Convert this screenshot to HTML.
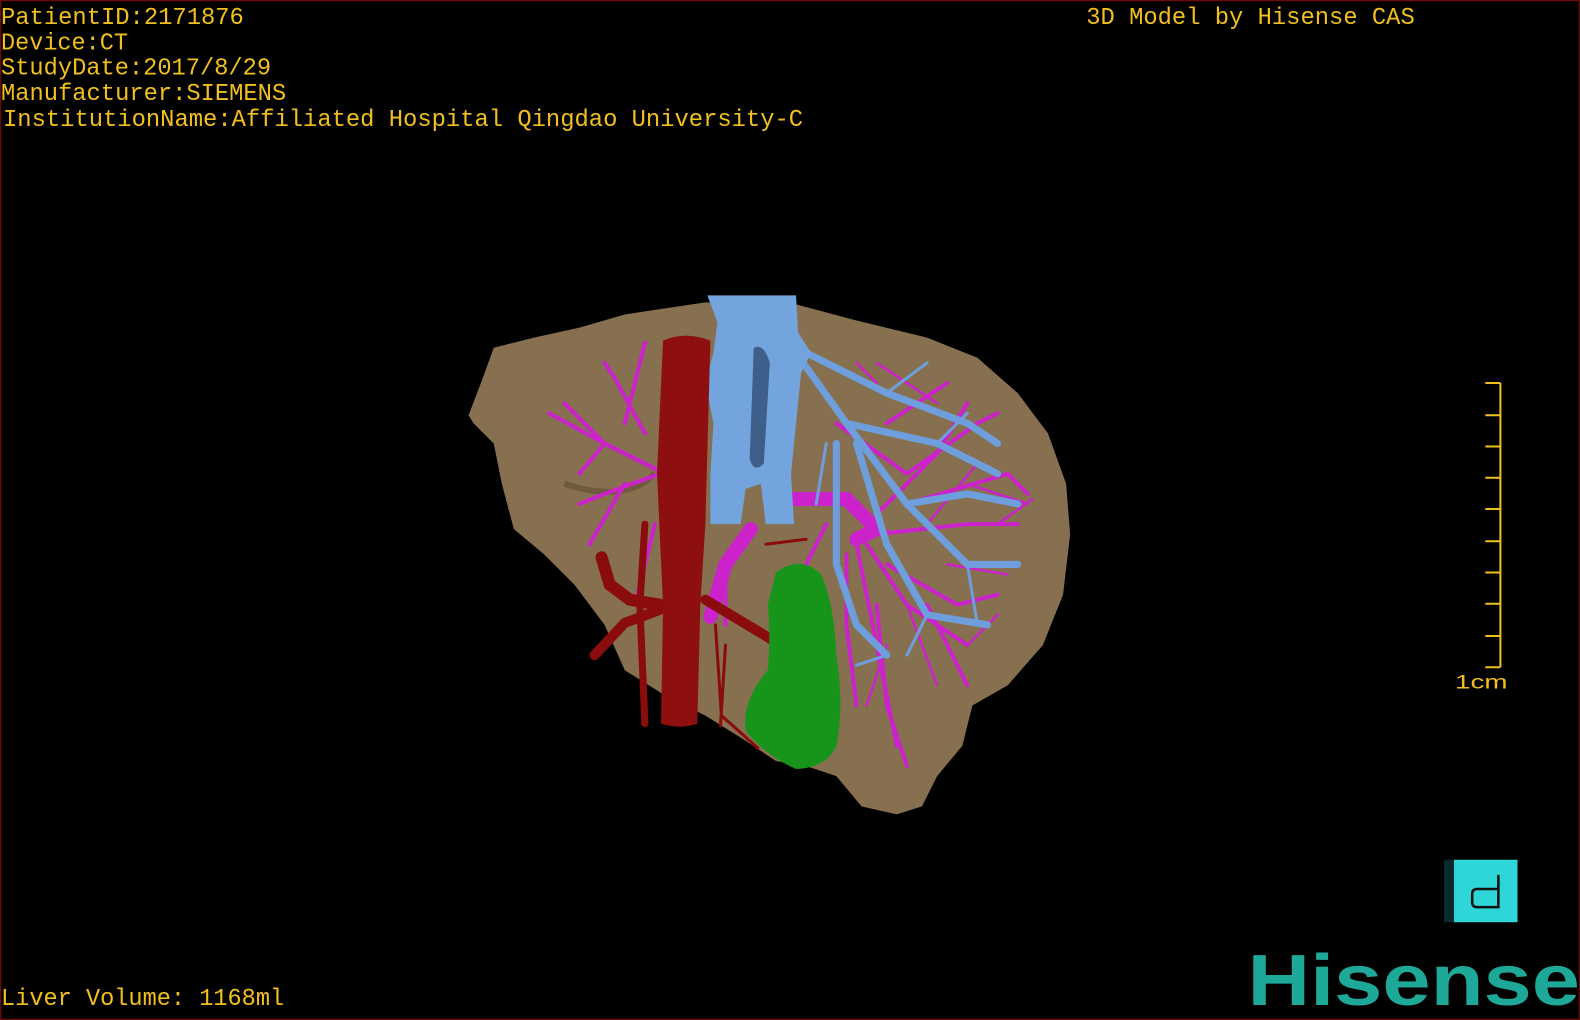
<!DOCTYPE html>
<html><head><meta charset="utf-8"><style>
html,body{margin:0;padding:0;background:#000;width:1580px;height:1020px;overflow:hidden}
svg{display:block}
text{font-family:"Liberation Mono",monospace;fill:#f2c01e}
</style></head><body>
<svg width="1580" height="1020" viewBox="0 0 1568 1012" preserveAspectRatio="none">
<rect x="0.5" y="0.5" width="1567" height="1011" fill="#000" stroke="#6a0a0a" stroke-width="1.5"/>
<g font-size="23.5">
<text x="1" y="24" textLength="241" lengthAdjust="spacingAndGlyphs">PatientID:2171876</text>
<text x="1" y="49" textLength="126" lengthAdjust="spacingAndGlyphs">Device:CT</text>
<text x="1" y="74" textLength="268" lengthAdjust="spacingAndGlyphs">StudyDate:2017/8/29</text>
<text x="1" y="99" textLength="283" lengthAdjust="spacingAndGlyphs">Manufacturer:SIEMENS</text>
<text x="3" y="125" textLength="794" lengthAdjust="spacingAndGlyphs">InstitutionName:Affiliated Hospital Qingdao University-C</text>
<text x="1078" y="24" textLength="326" lengthAdjust="spacingAndGlyphs">3D Model by Hisense CAS</text>
<text x="1" y="997" textLength="281" lengthAdjust="spacingAndGlyphs">Liver Volume: 1168ml</text>
</g>
<g stroke="#f2c01e" stroke-width="2" fill="none">
<path d="M1489 380 V662"/>
<path d="M1474 380H1489M1474 412H1489M1474 443H1489M1474 474H1489M1474 505H1489M1474 537H1489M1474 568H1489M1474 599H1489M1474 631H1489M1474 662H1489"/>
</g>
<text x="1444" y="683" font-size="19" style="font-family:'Liberation Sans',sans-serif" textLength="52" lengthAdjust="spacingAndGlyphs">1cm</text>
<rect x="1433" y="853" width="10" height="62" fill="#0b2a2c"/>
<rect x="1443" y="853" width="63" height="62" fill="#2fd6d8"/>
<path d="M1487 868V900H1466Q1461 900 1461 895V887Q1461 882 1466 882H1487" fill="none" stroke="#111" stroke-width="2.5"/>
<text x="1238" y="997" font-size="72" font-weight="bold" textLength="330" lengthAdjust="spacingAndGlyphs" style="font-family:'Liberation Sans',sans-serif;fill:#1da898">Hisense</text>
<path d="M465 412L478 378 490 345 530 335 575 325 620 312 700 300 790 302 850 318 920 335 970 355 1010 390 1040 430 1058 480 1062 530 1055 590 1035 640 1000 680 965 700 955 740 930 770 915 800 890 808 855 800 830 770 800 760 770 755 740 735 700 710 660 690 620 665 600 620 570 580 540 550 510 525 498 480 490 440 470 420Z" fill="#87704f"/>
<path d="M560 480 Q620 500 650 470" stroke="#6f5a3e" stroke-width="6" fill="none"/>
<g stroke="#cc22cc" fill="none" stroke-linecap="round">
<path stroke-width="4" d="M660 470L600 440 560 400M600 440L575 470M640 430L610 375 600 360M620 420L640 340M655 470L600 490 575 500M620 480L585 540M650 520L640 560 630 600M600 440L545 410"/>
<path stroke-width="14" d="M745 525L720 560 705 612"/>
<path stroke-width="14" d="M780 495L840 495 870 525 850 535"/>
<path stroke-width="4" d="M870 510L930 450 960 400M900 500L1000 470 1020 490M870 530L960 520 1010 520M860 540L900 600 960 640M850 540L870 640 890 740M840 550L840 620 850 700M880 560L950 600 990 590M900 470L970 420 990 410M830 420L900 470M880 420L940 380M820 520L800 560M720 560L720 620M870 600L880 700 900 760M920 600L960 680"/>
<path stroke-width="2.5" d="M880 640L860 700M900 600L930 680M940 560L1000 570M960 480L1020 500M850 360L870 380M870 360L930 400M920 520L970 460M990 520L1025 495M960 640L990 610"/>
</g>
<g stroke="#6e9fdc" fill="none" stroke-linecap="round">
<path stroke-width="7" d="M790 350L840 420 900 500 960 560 1010 560M800 350L880 390 960 420 990 440M840 420L930 440 990 470M900 500L960 490 1010 500M850 440L880 540 920 610 980 620M830 440L830 560 850 620 880 650"/>
<path stroke-width="3" d="M880 390L920 360M930 440L960 410M960 560L970 620M920 610L900 650M880 650L850 660M820 440L810 500"/>
</g>
<path d="M702 293L790 293 792 330 805 350 795 370 790 420 785 470 788 520 760 520 755 480 740 485 735 520 705 520 705 470 708 420 700 380 708 350 712 320Z" fill="#74a4de"/>
<path d="M748 345 Q758 340 764 360 L758 460 Q748 470 744 455Z" fill="#3e5f8a"/>
<g stroke="#8a0c0c" fill="none" stroke-linecap="round">
<path stroke-width="12" d="M597 553L605 580 625 595 655 600"/>
<path stroke-width="10" d="M590 650L620 618 655 605M700 595L775 640"/>
<path stroke-width="7" d="M640 520L635 600 640 718"/>
<path stroke-width="3" d="M710 620L716 710 752 742M720 640L715 720M760 540L800 535"/>
</g>
<path d="M658 338Q680 328 705 338L700 520 695 600 692 718Q675 724 656 718L658 600 652 470Z" fill="#8e0f0f"/>
<path d="M770 568Q795 550 815 570 828 600 830 650 838 700 830 740 820 762 790 763 760 750 740 725 736 695 762 665 765 630 762 600Z" fill="#17951b"/>
</svg>
</body></html>
